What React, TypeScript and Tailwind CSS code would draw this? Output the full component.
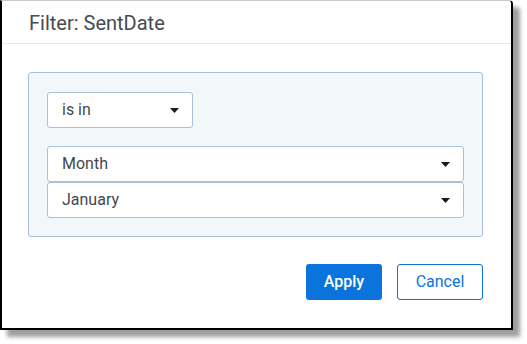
import React from "react";

function Caret() {
    return (
        <svg width="9" height="5" viewBox="0 0 9 5" className="shrink-0">
            <path d="M0 0h9L4.5 5z" fill="#1a1a1a" />
        </svg>
    );
}

function Select({ label, className }: { label: string; className?: string }) {
    return (
        <div
            className={
                "flex items-center justify-between bg-white border border-[#a9c0dc] rounded-[3px] pl-[14px] pr-[13px] text-[16px] text-[#45484c] " +
                (className || "")
            }
        >
            <span>{label}</span>
            <Caret />
        </div>
    );
}

export default function App() {
    return (
        <div className="w-[527px] h-[344px] bg-white font-['Roboto',sans-serif]">
            <div className="w-[513px] h-[330px] bg-white flex flex-col border-l-2 border-r-2 border-b-2 border-t border-l-black border-r-black border-b-black border-t-[#c8c8c8] rounded-tr-[4px] shadow-[7px_7px_4px_rgba(0,0,0,0.38)]">
                {/* Header */}
                <div className="h-[43px] border-b border-[#dfe8f1] flex items-center pl-[27px]">
                    <span className="text-[20px] text-[#464b52] pt-[2px]">Filter: SentDate</span>
                </div>

                {/* Body */}
                <div className="pl-[26px] pr-[28px] pt-[28px]">
                    <div className="bg-[#f2f7fa] border border-[#a9c0dc] rounded-[3px] px-[18px] pt-[19px] pb-[18px]">
                        <Select label="is in" className="w-[146px] h-[36px]" />
                        <div className="mt-[18px] flex flex-col">
                            <Select label="Month" className="h-[36px]" />
                            <Select label="January" className="h-[36px]" />
                        </div>
                    </div>
                </div>

                {/* Footer */}
                <div className="flex justify-end gap-[15px] pl-[26px] pr-[28px] mt-[27px]">
                    <button className="w-[76px] h-[36px] rounded-[3px] bg-[#0a74dc] text-white text-[16px] font-medium">
                        Apply
                    </button>
                    <button className="w-[86px] h-[36px] rounded-[3px] border border-[#0a74dc] bg-white text-[#0a74dc] text-[16px]">
                        Cancel
                    </button>
                </div>
            </div>
        </div>
    );
}
